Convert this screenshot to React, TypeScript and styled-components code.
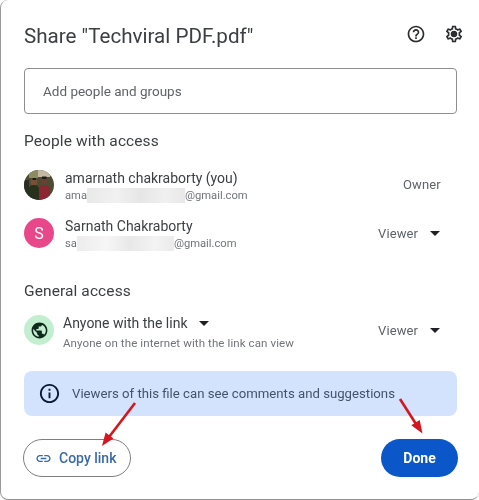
import React from "react";
import styled, { createGlobalStyle } from "styled-components";
import {
  MdHelpOutline,
  MdOutlineSettings,
  MdPublic,
  MdInfoOutline,
  MdLink,
  MdArrowDropDown,
} from "react-icons/md";

const GlobalStyle = createGlobalStyle`
  html, body {
    margin: 0;
    padding: 0;
    background: #ffffff;
  }
`;

const PhotoAvatar = () => (
  <AvatarSvg viewBox="0 0 30 30">
    <defs>
      <clipPath id="avatar-clip">
        <circle cx="15" cy="15" r="15" />
      </clipPath>
      <filter id="avatar-soft">
        <feGaussianBlur stdDeviation="0.7" />
      </filter>
    </defs>
    <g clipPath="url(#avatar-clip)">
      <rect width="30" height="30" fill="#4c4c34" />
      <g filter="url(#avatar-soft)">
        <rect x="5" y="0" width="9" height="8" fill="#8d8b62" />
        <rect x="14" y="0" width="12" height="7" fill="#c4b8a0" />
        <rect x="0" y="10" width="5" height="20" fill="#2a2d22" />
        <circle cx="10" cy="12" r="3.4" fill="#7a5038" />
        <circle cx="20" cy="11" r="3.2" fill="#6b4030" />
        <path d="M4 30V20q1-5 6-5t5 5v10z" fill="#26301f" />
        <path d="M15 30V19q0-4 5-4t6 4v11z" fill="#8c2530" />
        <rect x="8.500" y="8" width="3.500" height="2" fill="#1e1a16" />
        <rect x="18" y="6.500" width="4.500" height="2.400" fill="#1e1a16" />
      </g>
    </g>
  </AvatarSvg>
);

const MailLine = ({
  prefix,
  hidden,
  faint,
}: {
  prefix: string;
  hidden: number;
  faint?: boolean;
}) => (
  <Email>
    {prefix}
    <Smudge width={hidden} faint={faint} />
    @gmail.com
  </Email>
);

const RoleMenu = () => (
  <Role>
    Viewer
    <RoleCaret>
      <MdArrowDropDown />
    </RoleCaret>
  </Role>
);

const App = () => {
  return (
    <>
      <GlobalStyle />
      <Dialog>
        <Header>
          <Title>Share "Techviral PDF.pdf"</Title>
          <HeaderIcons>
            <MdHelpOutline />
            <Gear>
              <MdOutlineSettings />
            </Gear>
          </HeaderIcons>
        </Header>

        <AddPeople>Add people and groups</AddPeople>

        <SectionTitle>People with access</SectionTitle>
        <PeopleList>
          <PersonRow>
            <PhotoAvatar />
            <PersonText>
              <Name>amarnath chakraborty (you)</Name>
              <MailLine prefix="ama" hidden={98} />
            </PersonText>
            <OwnerRole>Owner</OwnerRole>
          </PersonRow>
          <PersonRow>
            <LetterAvatar>S</LetterAvatar>
            <PersonText>
              <Name>Sarnath Chakraborty</Name>
              <MailLine prefix="sa" hidden={97} faint />
            </PersonText>
            <RoleMenu />
          </PersonRow>
        </PeopleList>

        <GeneralTitle>General access</GeneralTitle>
        <GeneralRow>
          <GlobeBadge>
            <MdPublic />
          </GlobeBadge>
          <GeneralText>
            <LinkScope>
              Anyone with the link
              <ScopeCaret>
                <MdArrowDropDown />
              </ScopeCaret>
            </LinkScope>
            <ScopeHint>Anyone on the internet with the link can view</ScopeHint>
          </GeneralText>
          <RoleMenu />
        </GeneralRow>

        <Notice>
          <NoticeIcon>
            <MdInfoOutline />
          </NoticeIcon>
          Viewers of this file can see comments and suggestions
        </Notice>

        <Footer>
          <CopyButton>
            <MdLink />
            Copy link
          </CopyButton>
          <DoneButton>Done</DoneButton>
        </Footer>

        <Arrows viewBox="0 0 479 500">
          <Arrow d="M135 403L109 437" />
          <ArrowHead points="102,446 105.600,432.400 113.400,438.600" />
          <Arrow d="M400 399L416 424" />
          <ArrowHead points="422.500,433.500 411.300,425.300 419.700,419.900" />
        </Arrows>
      </Dialog>
    </>
  );
};

const Dialog = styled.div`
  position: relative;
  box-sizing: border-box;
  width: 479px;
  height: 500px;
  padding: 0 22px 0 23px;
  background: #ffffff;
  border-left: 1px solid #9a9a9a;
  border-bottom: 1px solid #8f8f8f;
  border-radius: 8px 10px 8px 8px;
  font-family: Roboto, "Liberation Sans", sans-serif;
  color: #3c4043;
  overflow: hidden;
  filter: blur(0.35px);
`;

const Header = styled.header`
  display: flex;
  align-items: center;
  justify-content: space-between;
  height: 68px;
`;

const Title = styled.h1`
  margin: 0;
  font-size: 20.6px;
  font-weight: 400;
  color: #3c4043;
  position: relative;
  top: 2px;
`;

const HeaderIcons = styled.div`
  display: flex;
  gap: 18px;
  margin-right: -7px;
  color: #2b2d30;
  font-size: 20px;

  svg {
    display: block;
  }
`;

const Gear = styled.span`
  position: relative;
  display: block;

  &::after {
    content: "";
    position: absolute;
    left: 7px;
    top: 7px;
    width: 6px;
    height: 6px;
    border-radius: 50%;
    background: #2b2d30;
  }
`;

const AddPeople = styled.div`
  box-sizing: border-box;
  height: 46px;
  display: flex;
  align-items: center;
  padding-left: 18px;
  border: 1px solid #8e8e8e;
  border-radius: 4px;
  font-size: 13.500px;
  color: #5f6368;
`;

const SectionTitle = styled.h2`
  margin: 17px 0 0;
  font-size: 15.500px;
  line-height: 20px;
  font-weight: 400;
  letter-spacing: 0.1px;
  color: #3c4043;
`;

const PeopleList = styled.div`
  display: flex;
  flex-direction: column;
  gap: 18px;
  margin-top: 19px;
`;

const PersonRow = styled.div`
  display: flex;
  align-items: center;
  height: 30px;
`;

const AvatarSvg = styled.svg`
  display: block;
  flex: none;
  width: 30px;
  height: 30px;
`;

const LetterAvatar = styled.div`
  flex: none;
  width: 30px;
  height: 30px;
  display: flex;
  align-items: center;
  justify-content: center;
  border-radius: 50%;
  background: #e8488a;
  color: #ffffff;
  font-size: 16px;
`;

const PersonText = styled.div`
  flex: 1;
  margin-left: 11px;
  padding-top: 2px;
  min-width: 0;
`;

const Name = styled.div`
  font-size: 14px;
  line-height: 17px;
  color: #3c4043;
`;

const Email = styled.div`
  display: flex;
  align-items: center;
  font-size: 11.200px;
  line-height: 15px;
  margin-top: 1px;
  color: #70757a;
`;

const Smudge = styled.span<{ width: number; faint?: boolean }>`
  display: inline-block;
  width: ${({ width }) => width}px;
  height: 15px;
  background: ${({ faint }) =>
    faint
      ? "linear-gradient(90deg, #ececec, #f6f6f6 30%, #e8e8e8 55%, #f3f3f3 80%, #ebebeb)"
      : "linear-gradient(90deg, #e9e9e9, #f1f1f1 30%, #e6e6e6 55%, #f0f0f0 80%, #e8e8e8)"};
`;

const Role = styled.div`
  flex: none;
  display: flex;
  align-items: center;
  width: 79px;
  font-size: 13px;
  letter-spacing: 0.1px;
  color: #5f6368;
`;

const OwnerRole = styled(Role)`
  width: 39px;
  margin-right: 15px;
  position: relative;
  top: -1px;
`;

const RoleCaret = styled.span`
  display: flex;
  margin-left: 5px;
  font-size: 24px;
  color: #202124;
`;

const GeneralTitle = styled(SectionTitle)`
  margin-top: 33px;
`;

const GeneralRow = styled.div`
  display: flex;
  align-items: center;
  height: 44px;
  margin-top: 7px;
`;

const GlobeBadge = styled.div`
  flex: none;
  width: 30px;
  height: 30px;
  display: flex;
  align-items: center;
  justify-content: center;
  border-radius: 50%;
  background: #c4eed0;
  color: #0f2a1c;
  font-size: 19px;
`;

const GeneralText = styled.div`
  flex: 1;
  margin: 4px 0 0 9px;
  min-width: 0;
`;

const LinkScope = styled.div`
  display: flex;
  align-items: center;
  height: 20px;
  font-size: 14px;
  color: #3c4043;
`;

const ScopeCaret = styled.span`
  display: flex;
  margin-left: 4px;
  font-size: 24px;
  color: #202124;
`;

const ScopeHint = styled.div`
  font-size: 11.500px;
  line-height: 16px;
  margin-top: 2px;
  letter-spacing: 0.1px;
  color: #70757a;
`;

const Notice = styled.div`
  box-sizing: border-box;
  display: flex;
  align-items: center;
  height: 45px;
  margin-top: 19px;
  padding-left: 14px;
  border-radius: 8px;
  background: #d3e3fd;
  font-size: 13.200px;
  color: #44536a;
`;

const NoticeIcon = styled.span`
  display: flex;
  margin-right: 11px;
  font-size: 23px;
  color: #0c1b33;
`;

const Footer = styled.footer`
  display: flex;
  align-items: center;
  justify-content: space-between;
  margin: 23px -1px 0 -1px;
`;

const CopyButton = styled.button`
  box-sizing: border-box;
  display: flex;
  align-items: center;
  gap: 7px;
  height: 38px;
  width: 108px;
  padding: 0 0 0 11px;
  border: 1px solid #7f7f7f;
  border-radius: 19px;
  background: #ffffff;
  color: #3a6aa8;
  font-family: inherit;
  font-size: 14px;
  font-weight: 500;

  svg {
    font-size: 17px;
  }
`;

const DoneButton = styled.button`
  box-sizing: border-box;
  height: 38px;
  width: 77px;
  padding: 0;
  border: none;
  border-radius: 19px;
  background: #0b57c9;
  color: #ffffff;
  font-family: inherit;
  font-size: 14px;
  font-weight: 700;
`;

const Arrows = styled.svg`
  position: absolute;
  left: -1px;
  top: 0;
  width: 479px;
  height: 500px;
  pointer-events: none;
`;

const Arrow = styled.path`
  fill: none;
  stroke: #d3161f;
  stroke-width: 2.600;
`;

const ArrowHead = styled.polygon`
  fill: #d3161f;
`;

export default App;
